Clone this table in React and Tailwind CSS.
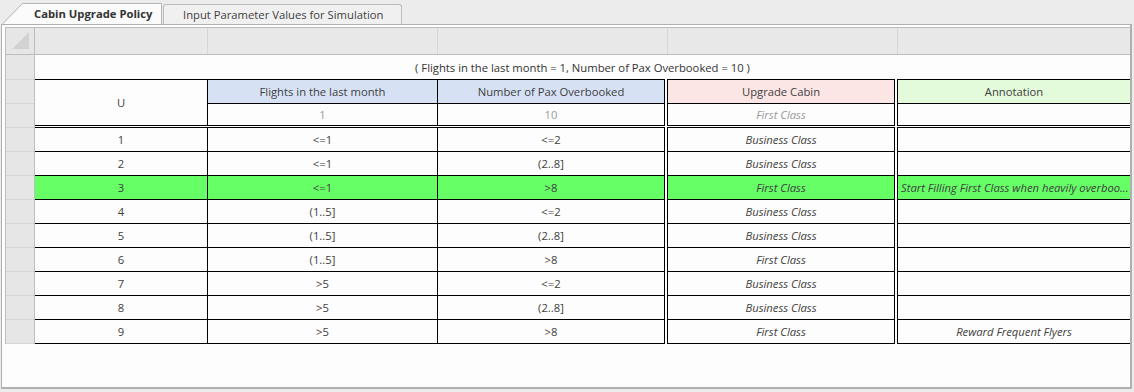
const rows = [
  { u: "1", f: "<=1", p: "<=2", c: "Business Class", a: "" },
  { u: "2", f: "<=1", p: "(2..8]", c: "Business Class", a: "" },
  { u: "3", f: "<=1", p: ">8", c: "First Class", a: "Start Filling First Class when heavily overboo...", hit: true },
  { u: "4", f: "(1..5]", p: "<=2", c: "Business Class", a: "" },
  { u: "5", f: "(1..5]", p: "(2..8]", c: "Business Class", a: "" },
  { u: "6", f: "(1..5]", p: ">8", c: "First Class", a: "" },
  { u: "7", f: ">5", p: "<=2", c: "Business Class", a: "" },
  { u: "8", f: ">5", p: "(2..8]", c: "Business Class", a: "" },
  { u: "9", f: ">5", p: ">8", c: "First Class", a: "Reward Frequent Flyers" },
];

const ActiveTab = () => (
  <div className="relative w-[162px] h-[21px] flex items-center pt-[2px] pl-[32px] font-bold text-[#333]">
    <svg className="absolute inset-0" width="162" height="21" viewBox="0 0 162 21">
      <path d="M0.5 21 L20.5 0.5 L159.5 0.5 L159.5 21" fill="#fbfbfb" stroke="#b4b4b4" />
    </svg>
    <span className="relative">Cabin Upgrade Policy</span>
  </div>
);

const DataRow = ({ r, first }) => {
  const h = first ? "h-[25px] border-t" : "h-[24px]";
  const bg = r.hit ? "bg-[#66ff66]" : "";
  return (
    <div className="flex">
      <div className={`w-[173px] ${h} ${bg} pt-px border-b border-r border-black flex items-center justify-center`}>{r.u}</div>
      <div className={`w-[230px] ${h} ${bg} pt-px border-b border-r border-black flex items-center justify-center`}>{r.f}</div>
      <div className={`w-[227px] ${h} ${bg} pt-px border-b border-r border-black flex items-center justify-center`}>{r.p}</div>
      <div className="w-[2px]" />
      <div className={`w-[228px] ${h} ${bg} pt-px border-b border-x border-black flex items-center justify-center italic`}>{r.c}</div>
      <div className="w-[2px]" />
      <div className={`flex-1 min-w-0 ${h} ${bg} pt-px border-b border-l border-black flex items-center italic px-[3px] whitespace-nowrap ${r.hit ? "justify-start" : "justify-center"}`}>
        {r.a}
      </div>
    </div>
  );
};

const HeadCol = ({ w, label, value, bg, italic, extra }) => (
  <div className={`${w} h-[47px] border-y border-black flex flex-col ${extra}`}>
    <div className={`h-[24px] ${bg} pt-px border-b border-black flex items-center justify-center`}>{label}</div>
    <div className={`flex-1 pt-px flex items-center justify-center text-[#9a9a9a] ${italic ? "italic" : ""}`}>{value}</div>
  </div>
);

export default function App() {
  return (
    <div className="w-[1134px] h-[392px] bg-[#ececec] font-['Open_Sans',sans-serif] text-[11.25px] text-[#404040] overflow-hidden">
      <div className="flex items-end h-[24px] pl-[2px]">
        <ActiveTab />
        <div className="h-[20px] w-[239px] ml-[-1px] pt-[2px] border border-b-0 border-[#bcbcbc] rounded-t-[3px] bg-[#f0f0f0] flex items-center pl-[19px] text-[#404040]">
          Input Parameter Values for Simulation
        </div>
      </div>
      <div className="ml-[1px] w-[1131px] h-[365px] border-t border-l border-r-2 border-b-2 border-[#b0b0b0] bg-[#fdfdfd] pt-[2px] pl-[3px] flex items-start">
        {/* row header column */}
        <div className="w-[30px] flex flex-col border-x border-[#bdbdbd] bg-[#e6e6e6]">
          <div className="h-[28px] border-y border-[#bdbdbd] relative">
            <svg className="absolute right-[5px] bottom-[5px]" width="17" height="17" viewBox="0 0 17 17">
              <path d="M17 0 L17 17 L0 17 Z" fill="#d2d2d2" />
            </svg>
          </div>
          <div className="h-[25px] border-b border-[#d4d4d4]" />
          {Array.from({ length: 11 }).map((_, i) => (
            <div key={i} className="h-[24px] border-b border-[#d4d4d4]" />
          ))}
        </div>
        {/* sheet */}
        <div className="w-[1095px] flex flex-col">
          <div className="h-[28px] flex border-y border-[#bdbdbd] bg-[#e8e8e8]">
            <div className="w-[173px] border-r border-[#d6d6d6]" />
            <div className="w-[230px] border-r border-[#d6d6d6]" />
            <div className="w-[230px] border-r border-[#d6d6d6]" />
            <div className="w-[230px] border-r border-[#d6d6d6]" />
            <div className="flex-1" />
          </div>
          <div className="h-[24px] pt-[2px] flex items-center justify-center text-[#333]">
            ( Flights in the last month = 1, Number of Pax Overbooked = 10 )
          </div>
          <div className="flex">
            <div className="w-[173px] h-[47px] pt-px border-y border-r border-black flex items-center justify-center">U</div>
            <HeadCol w="w-[230px]" extra="border-r" label="Flights in the last month" value="1" bg="bg-[#d6e2f4]" />
            <HeadCol w="w-[227px]" extra="border-r" label="Number of Pax Overbooked" value="10" bg="bg-[#d6e2f4]" />
            <div className="w-[2px]" />
            <HeadCol w="w-[228px]" extra="border-x" label="Upgrade Cabin" value="First Class" italic bg="bg-[#fce5e5]" />
            <div className="w-[2px]" />
            <HeadCol w="flex-1" extra="border-l" label="Annotation" value="" bg="bg-[#e3fadb]" />
          </div>
          <div className="h-px" />
          {rows.map((r, i) => (
            <DataRow key={r.u} r={r} first={i === 0} />
          ))}
        </div>
      </div>
    </div>
  );
}
